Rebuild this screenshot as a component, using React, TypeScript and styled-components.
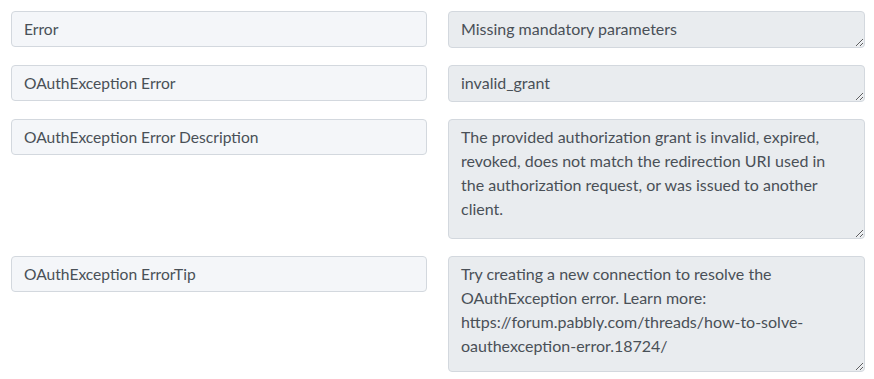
import React from 'react';
import styled, { createGlobalStyle } from 'styled-components';

const GlobalStyle = createGlobalStyle`
  body {
    margin: 0;
    background: #fff;
    font-family: Lato, "Open Sans", sans-serif;
  }
`;

const rows = [
  { label: 'Error', value: 'Missing mandatory parameters', height: 37 },
  { label: 'OAuthException Error', value: 'invalid_grant', height: 37 },
  {
    label: 'OAuthException Error Description',
    value:
      'The provided authorization grant is invalid, expired, revoked, does not match the redirection URI used in the authorization request, or was issued to another client.',
    height: 120,
  },
  {
    label: 'OAuthException ErrorTip',
    value:
      'Try creating a new connection to resolve the OAuthException error. Learn more: https://forum.pabbly.com/threads/how-to-solve-oauthexception-error.18724/',
    height: 116,
  },
];

function App() {
  return (
    <>
      <GlobalStyle />
      <Wrapper>
        {rows.map((r) => (
          <Row key={r.label}>
            <KeyInput readOnly value={r.label} />
            <ValueArea readOnly value={r.value} $h={r.height} />
          </Row>
        ))}
      </Wrapper>
    </>
  );
}

export default App;

const Wrapper = styled.div`
  padding: 11px 9px 0 11px;
  display: flex;
  flex-direction: column;
  gap: 17px;
`;

const Row = styled.div`
  display: grid;
  grid-template-columns: 416px 417px;
  column-gap: 21px;
  align-items: start;
`;

const KeyInput = styled.input`
  box-sizing: border-box;
  width: 100%;
  height: 36px;
  padding: 0 12px 1px;
  border: 1px solid #d3d8de;
  border-radius: 4px;
  background: #f4f6f9;
  color: #495057;
  font-family: Lato, "Open Sans", sans-serif;
  font-size: 15.6px;
  outline: none;
  margin: 0;
`;

const ValueArea = styled.textarea<{ $h: number }>`
  box-sizing: border-box;
  display: block;
  width: 100%;
  height: ${(p) => p.$h}px;
  padding: 5px 12px;
  border: 1px solid #d3d8de;
  border-radius: 4px;
  background: #e9ecef;
  color: #495057;
  font-family: Lato, "Open Sans", sans-serif;
  font-size: 16px;
  line-height: 24px;
  outline: none;
  margin: 0;
  overflow: hidden;
  resize: vertical;
`;
